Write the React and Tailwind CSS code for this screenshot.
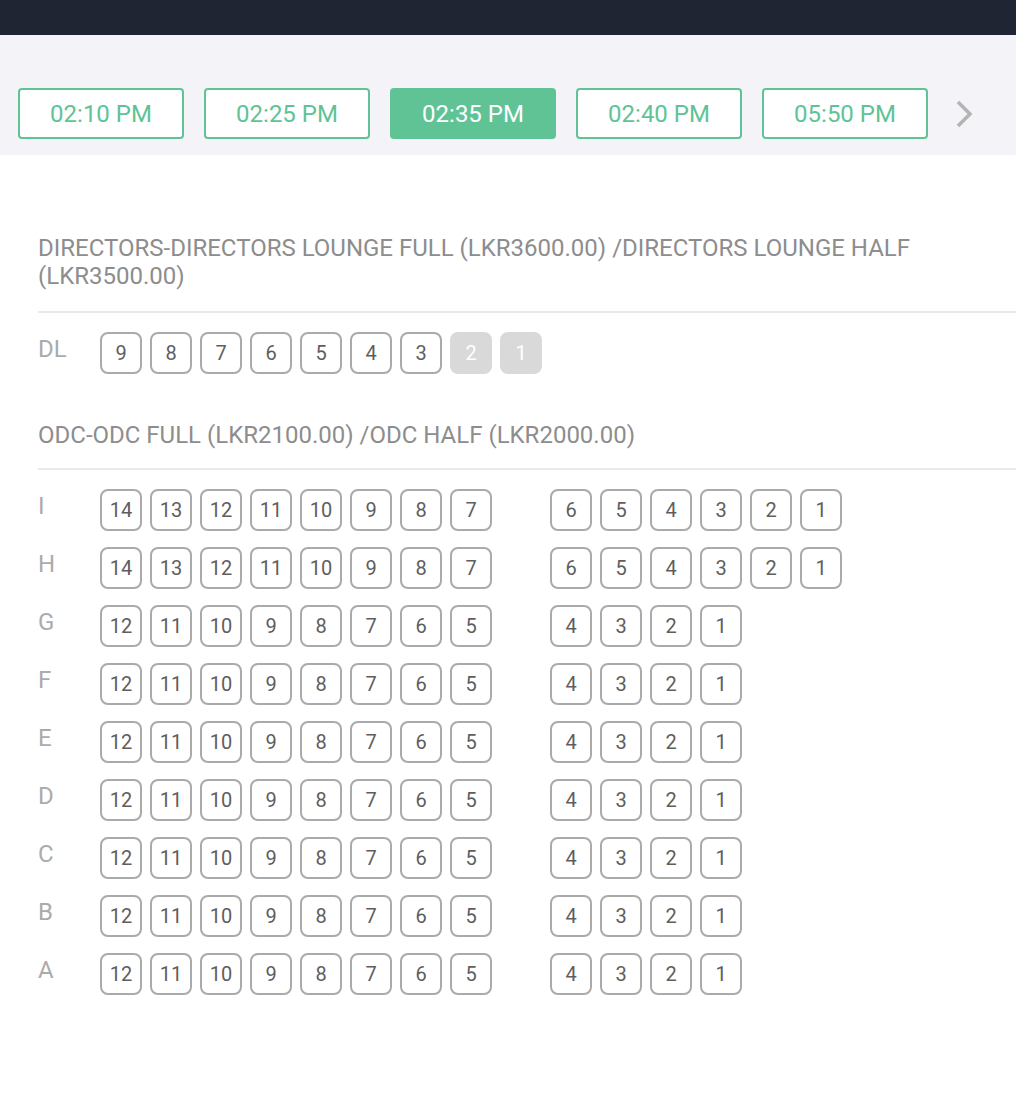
import React from "react";

const times = ["02:10 PM", "02:25 PM", "02:35 PM", "02:40 PM", "05:50 PM"];

function Seat({ n, disabled }) {
  if (n === null) return <div className="w-[42px] h-[42px] shrink-0" />;
  return (
    <div
      className={
        disabled
          ? "w-[42px] h-[42px] shrink-0 rounded-[8px] bg-[#d9d9d9] text-white flex items-center justify-center text-[20px]"
          : "w-[42px] h-[42px] shrink-0 rounded-[8px] border-2 border-[#aaaaaa] text-[#5e5e5e] flex items-center justify-center text-[20px]"
      }
    >
      {n}
    </div>
  );
}

function Row({ label, seats, disabledSet = [] }) {
  return (
    <div className="flex items-start">
      <div className="w-[62px] shrink-0 text-[24px] leading-[28px] text-[#ababab] pt-[3px]">{label}</div>
      <div className="flex gap-[8px]">
        {seats.map((n, i) => (
          <Seat key={i} n={n} disabled={disabledSet.includes(n)} />
        ))}
      </div>
    </div>
  );
}

const range = (a, b) => {
  const r = [];
  for (let i = a; i >= b; i--) r.push(i);
  return r;
};

export default function App() {
  const big = [...range(14, 7), null, ...range(6, 1)];
  const small = [...range(12, 5), null, ...range(4, 1)];
  const rows = [
    ["I", big],
    ["H", big],
    ["G", small],
    ["F", small],
    ["E", small],
    ["D", small],
    ["C", small],
    ["B", small],
    ["A", small],
  ];
  return (
    <div className="min-h-[1114px] bg-white" style={{ fontFamily: "Roboto, 'Liberation Sans', sans-serif" }}>
      <div className="h-[35px] bg-[#1f2532]" />
      <div className="h-[120px] bg-[#f4f4f8] flex items-start pt-[53px] pl-[18px] gap-[20px]">
        {times.map((t, i) => (
          <div
            key={t}
            className={
              i === 2
                ? "w-[166px] h-[51px] shrink-0 rounded-[4px] bg-[#5fc396] text-white flex items-center justify-center text-[24px]"
                : "w-[166px] h-[51px] shrink-0 rounded-[4px] border-2 border-[#5fc396] bg-white text-[#5fc396] flex items-center justify-center text-[24px]"
            }
          >
            {t}
          </div>
        ))}
        <svg width="20" height="30" viewBox="0 0 20 30" className="ml-[7px] mt-[11px] shrink-0">
          <polyline points="3,3 15,15 3,27" fill="none" stroke="#b3b3b3" strokeWidth="3.5" />
        </svg>
      </div>
      <div className="pl-[38px] pt-[79px]">
        <div className="border-b-2 border-[#eaeaea] pb-[21px] text-[24px] leading-[28px] text-[#8d8d8d]">
          DIRECTORS-DIRECTORS LOUNGE FULL (LKR3600.00) /DIRECTORS LOUNGE HALF (LKR3500.00)
        </div>
        <div className="pt-[19px]">
          <Row label="DL" seats={range(9, 1)} disabledSet={[2, 1]} />
        </div>
        <div className="mt-[47px] border-b-2 border-[#eaeaea] pb-[19px] text-[24px] leading-[28px] text-[#8d8d8d]">
          ODC-ODC FULL (LKR2100.00) /ODC HALF (LKR2000.00)
        </div>
        <div className="pt-[19px] flex flex-col gap-[16px]">
          {rows.map(([l, s]) => (
            <Row key={l} label={l} seats={s} />
          ))}
        </div>
      </div>
    </div>
  );
}
